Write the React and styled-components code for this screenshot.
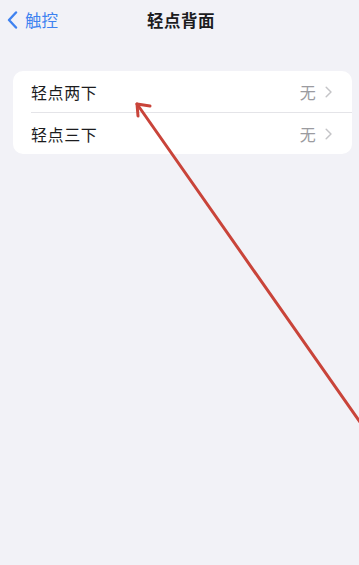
import React from "react"
import styled, { createGlobalStyle } from "styled-components"

const GlobalStyle = createGlobalStyle`
  html, body {
    margin: 0;
    padding: 0;
    background: #f2f2f7;
  }
  body {
    font-family: "Noto Sans CJK SC", "Noto Sans", sans-serif;
  }
`

const Page = styled.div`
  position: relative;
  width: 359px;
  height: 565px;
  overflow: hidden;
  background: #f2f2f7;
`

const NavBar = styled.div`
  display: grid;
  grid-template-columns: 1fr auto 1fr;
  align-items: center;
  height: 40px;
  padding: 0 7px;
`

const BackButton = styled.div`
  display: flex;
  align-items: center;
  gap: 7px;
  color: #3f82f0;
  font-size: 16.5px;
`

const Title = styled.div`
  font-size: 16.5px;
  font-weight: 700;
  color: #1c1c1e;
  letter-spacing: 0.5px;
  margin-left: 3px;
`

const Group = styled.div`
  margin: 31px 7px 0 13px;
  background: #ffffff;
  border-radius: 10px;
  overflow: hidden;
`

const Row = styled.div`
  display: flex;
  align-items: center;
  height: 41px;
  padding: 0 20px 0 18px;

  & + & {
    border-top: 1px solid #e4e4e8;
    margin-left: 18px;
    padding-left: 0;
  }
`

const Label = styled.div`
  flex: 1;
  font-size: 16px;
  color: #1c1c1e;
  letter-spacing: 0.6px;
`

const Value = styled.div`
  display: flex;
  align-items: center;
  gap: 9px;
  font-size: 16px;
  color: #9b9ba0;
`

const Overlay = styled.svg`
  position: absolute;
  left: 0;
  top: 0;
  pointer-events: none;
`

const Chevron = ({ size = 12, color = "#c4c4c7", width = 2 }) => (
  <svg width={size * 0.6} height={size} viewBox="0 0 6 10">
    <path d="M1 1 L5 5 L1 9" fill="none" stroke={color} strokeWidth={width * 0.6} strokeLinecap="round" strokeLinejoin="round" />
  </svg>
)

const BackChevron = () => (
  <svg width="11" height="18" viewBox="0 0 11 18">
    <path d="M9 1.5 L2 9 L9 16.5" fill="none" stroke="#3f82f0" strokeWidth="2.4" strokeLinecap="round" strokeLinejoin="round" />
  </svg>
)

const rows = [
  { label: "轻点两下", value: "无" },
  { label: "轻点三下", value: "无" },
]

export default function App() {
  return (
    <Page>
      <GlobalStyle />
      <NavBar>
        <BackButton>
          <BackChevron />
          <span>触控</span>
        </BackButton>
        <Title>轻点背面</Title>
        <div />
      </NavBar>
      <Group>
        {rows.map(r => (
          <Row key={r.label}>
            <Label>{r.label}</Label>
            <Value>
              {r.value}
              <Chevron />
            </Value>
          </Row>
        ))}
      </Group>
      <Overlay width="359" height="565" viewBox="0 0 359 565">
        <path d="M362 425 L137 104" stroke="#c9443a" strokeWidth="3" strokeLinecap="round" />
        <path d="M150 106 L137 104 L138 116" fill="none" stroke="#c9443a" strokeWidth="3" strokeLinecap="round" strokeLinejoin="round" />
      </Overlay>
    </Page>
  )
}
